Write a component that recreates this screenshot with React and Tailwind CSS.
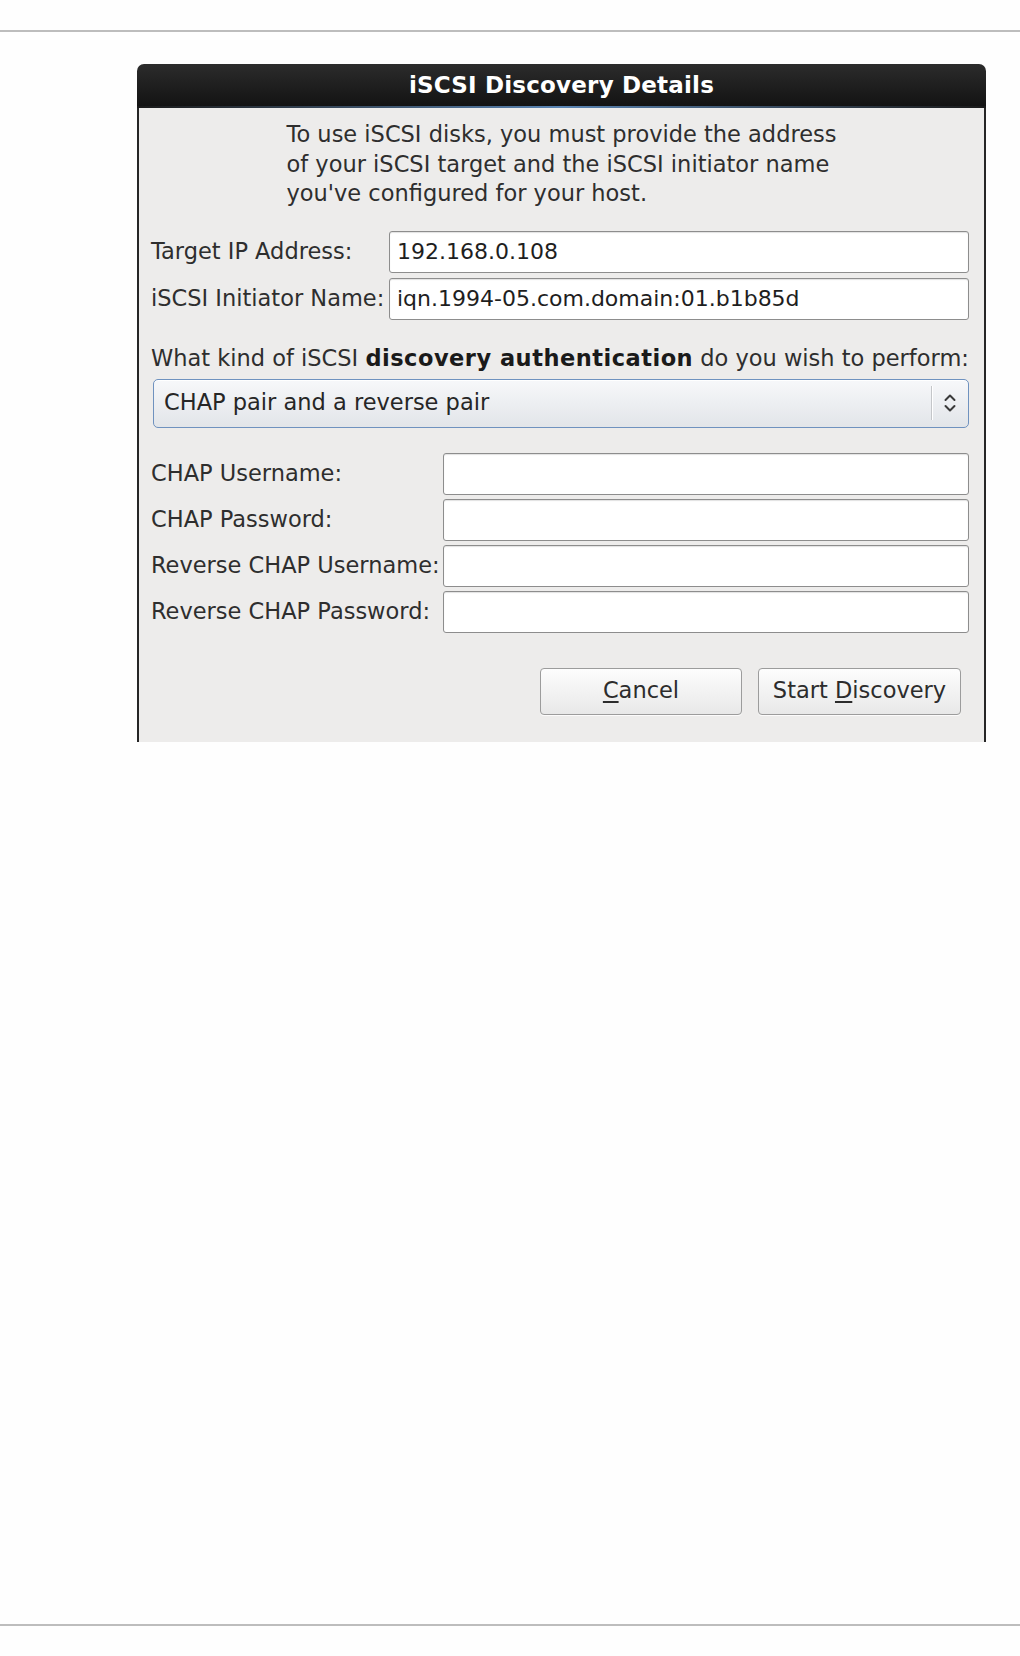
const FONT = "font-['DejaVu_Sans',sans-serif]";

function TextInput({ value = '' }) {
  return (
    <div className="h-[42px] flex-1 flex items-center rounded-[3px] border border-[#8d8d8d] bg-white px-[7px] text-[22px] text-[#1e1e1e] shadow-[inset_0_1px_1px_rgba(0,0,0,0.12)]">
      {value}
    </div>
  );
}

function Mnemonic({ children }) {
  return <span className="underline underline-offset-[3px] decoration-[1.5px]">{children}</span>;
}

function Button({ children, width }) {
  return (
    <button
      className={`${width} h-[47px] rounded-[4px] border border-[#9c9c9c] bg-linear-to-b from-[#fdfdfd] to-[#e8e8e8] text-[22.5px] text-[#2c2c2c] shadow-[0_1px_0_rgba(255,255,255,0.8)]`}
    >
      {children}
    </button>
  );
}

function UpDown() {
  return (
    <svg width="14" height="22" viewBox="0 0 14 22" fill="none" stroke="#3a3a3a" strokeWidth="2" strokeLinecap="round" strokeLinejoin="round">
      <polyline points="2.5 8 7 3.5 11.5 8" />
      <polyline points="2.5 14 7 18.5 11.5 14" />
    </svg>
  );
}

export default function App() {
  return (
    <div className={`${FONT} w-[1020px] h-[1656px] bg-[#fefefe] flex flex-col`}>
      {/* top rule */}
      <div className="mt-[30px] h-[2px] bg-[#bdbdbd]" />

      {/* dialog */}
      <div className="ml-[137px] mt-[32px] w-[849px] flex flex-col">
        <div className="h-[44px] rounded-t-[7px] bg-linear-to-b from-[#2c2c2c] to-[#121212] flex flex-col">
          <div className="flex-1 flex items-center justify-center text-[23px] font-bold text-white tracking-[0.2px]">
            iSCSI Discovery Details
          </div>
          <div className="h-[2px] bg-linear-to-r from-[#1a1a1a] via-[#5a85b4] to-[#1a1a1a]" />
        </div>

        <div className="h-[634px] border-x-2 border-[#262626] bg-[#edeceb] flex flex-col text-[22.5px] text-[#2e2e2e]">
          {/* intro */}
          <div className="pt-[12px] flex justify-center">
            <p className="leading-[29.5px]">
              To use iSCSI disks, you must provide the address
              <br />
              of your iSCSI target and the iSCSI initiator name
              <br />
              you've configured for your host.
            </p>
          </div>

          {/* target + initiator */}
          <div className="mt-[22px] pl-[12px] pr-[15px] flex flex-col gap-[5px]">
            <div className="flex items-center">
              <span className="w-[238px] shrink-0 whitespace-nowrap">Target IP Address:</span>
              <TextInput value="192.168.0.108" />
            </div>
            <div className="flex items-center">
              <span className="w-[238px] shrink-0 whitespace-nowrap">iSCSI Initiator Name:</span>
              <TextInput value="iqn.1994-05.com.domain:01.b1b85d" />
            </div>
          </div>

          {/* auth question */}
          <p className="mt-[25px] pl-[12px] leading-[26px] whitespace-nowrap">
            What kind of iSCSI <span className="font-bold text-[#1a1a1a] tracking-[0.5px]">discovery authentication</span> do you wish to perform:
          </p>
          <div className="mt-[8px] ml-[14px] mr-[15px] h-[49px] rounded-[5px] border border-[#6f92bf] bg-linear-to-b from-[#f7f8fa] to-[#e2e5e9] flex items-center shadow-[inset_0_1px_0_rgba(255,255,255,0.9)]">
            <span className="flex-1 pl-[10px] text-[#262626]">CHAP pair and a reverse pair</span>
            <div className="h-[34px] w-[1px] bg-[#c4c6c9] shadow-[1px_0_0_#ffffff]" />
            <div className="w-[36px] flex justify-center">
              <UpDown />
            </div>
          </div>

          {/* CHAP fields */}
          <div className="mt-[25px] pl-[12px] pr-[15px] flex flex-col gap-[4px]">
            {['CHAP Username:', 'CHAP Password:', 'Reverse CHAP Username:', 'Reverse CHAP Password:'].map((label) => (
              <div key={label} className="flex items-center">
                <span className="w-[292px] shrink-0 whitespace-nowrap">{label}</span>
                <TextInput />
              </div>
            ))}
          </div>

          {/* actions */}
          <div className="mt-[35px] pr-[23px] flex justify-end gap-[16px]">
            <Button width="w-[202px]">
              <Mnemonic>C</Mnemonic>ancel
            </Button>
            <Button width="w-[203px]">
              Start <Mnemonic>D</Mnemonic>iscovery
            </Button>
          </div>
        </div>
      </div>

      {/* bottom rule */}
      <div className="mt-auto mb-[30px] h-[2px] bg-[#bdbdbd]" />
    </div>
  );
}
